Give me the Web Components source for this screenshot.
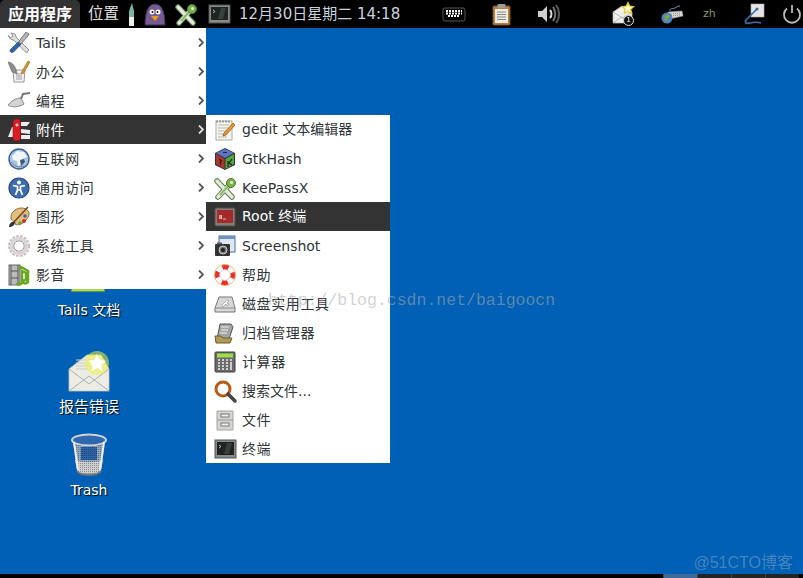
<!DOCTYPE html>
<html lang="zh">
<head>
<meta charset="utf-8">
<title>Tails desktop</title>
<style>
  html, body { margin: 0; height: 100%; }
  body { font-family: "DejaVu Sans", "Noto Sans CJK SC", sans-serif; overflow: hidden; }
</style>
</head>
<body>
<tails-desktop></tails-desktop>

<script>
// all icons live here, drawn on a 22x22 box unless they say otherwise
const ICONS = {
  tools: `<path d="M3 1l4 1 1.500 3.500L21 18l-2.500 3L6 8.500 2.500 7 0 3.500l2.500 2L5 4z" fill="#dcdcdc" stroke="#7a7a7a" stroke-width=".8"/><path d="M18 0l3 2-1 2-7 8-2.500-2z" fill="#b4b4b4" stroke="#666" stroke-width=".8"/><path d="M10 10l3 2.500-7.500 7.500c-1.500 1.500-4 0-3.500-2z" fill="#2f62a5" stroke="#1c3d70" stroke-width=".6"/>`,
  office: `<path d="M5 9h12l-1 12H6z" fill="#f3f3f0" stroke="#9a9a9a"/><path d="M8 12h6v7H8z" fill="#c9c5c9"/><path d="M0 1c4 0 8 4 9 12L4 11z" fill="#8d8d8d" stroke="#666" stroke-width=".6"/><path d="M20 0l2 1-7 12-2-1z" fill="#d99a32" stroke="#8a5b14" stroke-width=".6"/>`,
  trowel: `<path d="M0 15c4-5 9-7 13-7l3 6c-5 3-12 4-16 1z" fill="#d4d4d4" stroke="#8b8b8b"/><path d="M13 9l2-5 7-1" fill="none" stroke="#777" stroke-width="2"/>`,
  knife: `<path d="M0 18L4 8l2 0-1 10z" fill="#e8e8e8"/><path d="M13 3h9l-3 4h-6zM13 10l9 1v4l-9-1zM13 16h9v4h-9z" fill="#eee"/><rect x="5" y="0" width="7.500" height="22" rx="3.500" fill="#dc1c24" stroke="#8d0e13" stroke-width=".6"/><path d="M7.500 6h3M9 4.500v3" stroke="#fff"/>`,
  globe: `<circle cx="11" cy="11" r="10" fill="#a9c4e0" stroke="#3c5f92" stroke-width="1.400"/><path d="M4 8l5-5 7 1 3 5-5 2-1 5-3 3-1-6-4-1z" fill="#f2f5f8"/><path d="M12 12l4-1 1 3-4 4z" fill="#425a7d"/><path d="M3 14c3 4 8 6 13 4" fill="none" stroke="#5e85b5"/>`,
  access: `<circle cx="11" cy="11" r="10" fill="#3d6db0" stroke="#23487f" stroke-width="1.200"/><circle cx="11" cy="5.500" r="2" fill="#fff"/><path d="M5 8.500l4.500 1V13L7.500 18M17 8.500l-4.500 1V13l2 5M9.500 13h3" fill="none" stroke="#fff" stroke-width="1.700"/>`,
  palette: `<path d="M3 11C3 4 12 0 18 3c5 3 3 8 0 11-3 4-8 6-11 4 1-3-4-2-4-7z" fill="#e3bf7d" stroke="#8c6a30"/><circle cx="16" cy="15" r="2" fill="#d62b2b"/><circle cx="12" cy="17" r="1.800" fill="#58a83a"/><circle cx="17" cy="10" r="1.800" fill="#3a64b8"/><path d="M20 1L6 16" stroke="#6d4a22" stroke-width="1.500"/><path d="M1 21c0-4 3-6 6-5 0 3-3 5-6 5z" fill="#333"/>`,
  gear: `<circle cx="11" cy="11" r="9" fill="none" stroke="#c9bfc2" stroke-width="4" stroke-dasharray="2.400 1.200"/><circle cx="11" cy="11" r="7.500" fill="none" stroke="#ddd6d8" stroke-width="3.500"/><circle cx="11" cy="11" r="5.200" fill="#fff" stroke="#9c9497"/>`,
  media: `<rect x="1" y="1" width="11" height="20" fill="#bbb" stroke="#666"/><path d="M3 1v20M10 1v20M3 7h7M3 14h7" stroke="#555"/><path d="M11 5l2-2 7 4v10c0 3-5 3-5 1s2-2 3-2V9l-4-2v11c0 3-5 3-5 1" fill="none" stroke="#6aa61e" stroke-width="2.500"/>`,
  gedit: `<rect x="2" y="2" width="16" height="19" fill="#f6f4ec" stroke="#aaa"/><path d="M4 6h11M4 9h11M4 12h9M4 15h7M4 18h9" stroke="#b5b5b5"/><path d="M3 1.500v2M6 1.500v2M9 1.500v2M12 1.500v2M15 1.500v2" stroke="#666"/><path d="M19 4l2 2-9 10-3 1 1-3z" fill="#e89a2c" stroke="#87500d" stroke-width=".7"/>`,
  hash: `<path d="M11 0l10 5v12l-10 5-10-5V5z" fill="#333"/><path d="M11 1l9 4-9 5-9-5z" fill="#5c74c4"/><path d="M2 6l8.500 5v10L2 16z" fill="#b0342c"/><path d="M20 6l-8.500 5v10l8.500-5z" fill="#53a63b"/><path d="M9 4.500h4M5 11l3 2M6.500 12v5M14 13v6M18 11l-3 4 3 2" fill="none" stroke="#222" stroke-width="1.200"/>`,
  key: `<path d="M3 4l15 16M4 20L15 8" fill="none" stroke="#5d7f4a" stroke-width="5.500" stroke-linecap="round"/><path d="M3 4l15 16M4 20L15 8" fill="none" stroke="#e3e9dd" stroke-width="3.500" stroke-linecap="round"/><path d="M6 18L15 8" stroke="#8cbc5f" stroke-width="2"/><circle cx="17" cy="6" r="4.500" fill="#7ab24a" stroke="#4d7a2a"/><circle cx="17.500" cy="5.500" r="1.500" fill="#e9f2e0"/>`,
  rootterm: `<rect x="1" y="2" width="20" height="18" rx="1" fill="#827f7b" stroke="#524f4b"/><rect x="3" y="4" width="16" height="13" fill="#a32a28"/><path d="M5 12h3M5 10h3M6 9v4M7.500 9v4M9 13h3" stroke="#f5d5d5" stroke-width=".8"/>`,
  shot: `<rect x="5" y="1" width="16" height="16" fill="#dfe7f0" stroke="#3f6aa0"/><rect x="5" y="1" width="16" height="3" fill="#6d93c0"/><rect x="1" y="9" width="15" height="12" rx="1" fill="#333"/><rect x="3" y="7.500" width="5" height="2" fill="#555"/><circle cx="9" cy="15" r="4" fill="#777" stroke="#ccc"/><circle cx="9" cy="15" r="2" fill="#222"/>`,
  help: `<circle cx="11" cy="11" r="8" fill="none" stroke="#fff" stroke-width="5.500"/><circle cx="11" cy="11" r="8" fill="none" stroke="#e62e2e" stroke-width="5" stroke-dasharray="6.300 6.300" stroke-dashoffset="3"/><circle cx="11" cy="11" r="10.500" fill="none" stroke="#eeb15e" stroke-width=".9"/><circle cx="11" cy="11" r="5.300" fill="none" stroke="#c5c0b8" stroke-width=".7"/>`,
  disk: `<path d="M5 4h13l3 11v4H1v-4z" fill="#d7d7d7" stroke="#777"/><path d="M1 15h20" stroke="#888"/><path d="M8 12l5-5 2 1-2 2 2 1-2 2-1-2-3 3z" fill="#f6f6f6" stroke="#888" stroke-width=".6"/>`,
  archive: `<path d="M6 2h11l2 3-4 12H3z" fill="#a5a5a5" stroke="#555"/><path d="M7 5h8M7 8h7M6 11h7" stroke="#eee"/><path d="M1 14h6l2 2h9l-2 5H2z" fill="#b09a59" stroke="#6d5c2c"/>`,
  calc: `<rect x="1" y="1" width="20" height="20" rx="1" fill="#6b6b6b" stroke="#3f3f3f"/><rect x="3" y="2.500" width="16" height="4" fill="#9be046"/><path d="M4 9h2M8 9h2M12 9h2M16 9h2M4 12h2M8 12h2M12 12h2M4 15h2M8 15h2M12 15h2M4 18h2M8 18h2M12 18h2" stroke="#cfcfcf" stroke-width="2"/><rect x="16" y="11" width="2" height="8" fill="#cfcfcf"/>`,
  search: `<circle cx="9" cy="9" r="7" fill="#fff" stroke="#b85a12" stroke-width="3"/><path d="M14 14l7 7" stroke="#444" stroke-width="3.500" stroke-linecap="round"/>`,
  files: `<path d="M3 2h16v19H3z" fill="#d4d6d2" stroke="#a3a5a1"/><path d="M3 11h16" stroke="#999"/><rect x="7" y="5" width="8" height="3" fill="#f2f2f2" stroke="#777"/><rect x="7" y="14" width="8" height="3" fill="#f2f2f2" stroke="#777"/>`,
  term: `<rect x="1" y="2" width="21" height="18" fill="#8a8a86" stroke="#555"/><rect x="3" y="4" width="17" height="13" fill="#1f2422"/><path d="M13 5l-3 11h5l3-11z" fill="#3a403e"/><path d="M5 7l2 1.500L5 10" fill="none" stroke="#ddd" stroke-width=".8"/>`,
  pencil: `<path d="M4 0l2 8v6H1V8z" fill="#78b6a6"/><rect x="1" y="14" width="5" height="9" fill="#f0f0e8"/>`,
  pidgin: `<path d="M1 22C1 9 4 1 11 1s10 8 10 21z" fill="#745b92" stroke="#3d2c52"/><circle cx="8" cy="9" r="2.500" fill="#fff"/><circle cx="14" cy="9" r="2.500" fill="#fff"/><circle cx="8.500" cy="9" r="1" fill="#111"/><circle cx="13.500" cy="9" r="1" fill="#111"/><path d="M7 13h8l-4 5z" fill="#ef9a26"/>`,
  keyboard: `<rect x="1" y="5" width="22" height="13" rx="2" fill="#050505" stroke="#555"/><path d="M4 8h16M4 10.500h16M6 13h12" stroke="#fff" stroke-width="1.800" stroke-dasharray="2 1"/>`,
  clipboard: `<rect x="2" y="3" width="17" height="19" rx="1" fill="#b57f45" stroke="#7c5226"/><rect x="4" y="6" width="13" height="14" fill="#ecebe4"/><path d="M6 9h9M6 11.500h9M6 14h9M6 16.500h9" stroke="#888"/><rect x="6.500" y="1" width="8" height="4" rx="1" fill="#9b9b9b"/>`,
  volume: `<path d="M1 8h4l5-5v16l-5-5H1z" fill="#cfcfcf"/><path d="M13 7c2 2 2 6 0 8" fill="none" stroke="#ddd" stroke-width="2"/><path d="M16 4c3 4 3 10 0 14" fill="none" stroke="#777" stroke-width="2"/><path d="M19 2c4 5 4 13 0 18" fill="none" stroke="#555" stroke-width="2"/>`,
  mail: `<path d="M0 9l9-6 10 6v11H0z" fill="#eeeeea" stroke="#b9b9b5" stroke-width=".7"/><path d="M0 20l9-6 10 6M0 9l9.500 6L19 9" fill="none" stroke="#aaa" stroke-width=".8"/><path d="M15 -.5l1.700 3.600 3.900.5-2.900 2.700.8 3.900-3.500-2-3.500 2 .8-3.900-2.900-2.700 3.900-.5z" fill="#fdfbe0" stroke="#e6c92c" stroke-width="1.300"/>`,
  kbglobe: `<path d="M7 9l14-1 1 5-14 3z" fill="#d8d8d8" stroke="#999" stroke-width=".6"/><path d="M10 11l9-1M10 13l9-1" stroke="#888" stroke-dasharray="1 1"/><path d="M9 8c-1-3 3-2 5-3s2-2 5-2" fill="none" stroke="#6f95bd"/><circle cx="6" cy="15" r="5.500" fill="#4e84c4"/><path d="M3 13l4-2 2 3-3 2 0 3-2-2z" fill="#7fa53b"/>`,
  edit: `<rect x="9" y="1" width="13" height="13" fill="#e6e6e6" stroke="#aaa" stroke-width=".6"/><path d="M15 6L4 17c-2 3 1 4 4 3s9-1 11 0" fill="none" stroke="#3c6fb4" stroke-width="1.700"/><circle cx="15" cy="6" r="1.600" fill="#3c6fb4"/>`,
  power: `<path d="M6 5.500a8 8 0 1 0 10 0" fill="none" stroke="#bbb" stroke-width="1.800"/><path d="M11 2v8" stroke="#bbb" stroke-width="1.800"/>`,
  bigmail: `<path d="M2 17L20 3h14l8 14v22H2z" fill="#ecece6" stroke="#c4c4bc" stroke-width=".8"/><path d="M9 8h18M9 11h18M9 14h14M9 17h12" stroke="#cfcfc9"/><path d="M2 39l20-15 20 15M2 17l20 15 20-15" fill="none" stroke="#b0b0a8"/><circle cx="30" cy="11" r="12" fill="#eef23a" opacity=".55"/><path d="M30 2l2.700 6 6.300.7-4.700 4.300 1.300 6.300-5.600-3.200-5.600 3.200 1.300-6.300L21 8.700l6.300-.7z" fill="#fff"/>`,
  trash: `<defs><pattern id="mesh" width="2" height="2" patternUnits="userSpaceOnUse"><rect width="1" height="1" fill="#111" opacity=".35"/></pattern></defs><ellipse cx="19" cy="7" rx="17" ry="5.500" fill="#2f68ae" stroke="#d3d3d3" stroke-width="2"/><path d="M3 9l4 28c2 6 22 6 24 0l4-28c-3 6-29 6-32 0z" fill="#8fa6bf"/><path d="M11 14h16v13H11z" fill="#2c62a8"/><path d="M5 27c8 3 20 3 28 0l-2 10c-2 6-22 6-24 0z" fill="#cfcfcf"/><path d="M3 9l4 28c2 6 22 6 24 0l4-28c-3 6-29 6-32 0z" fill="url(#mesh)"/><path d="M4 9l4 28M34 9l-4 28" stroke="#ededed" stroke-width="2"/><path d="M7 38c3 5 21 5 24 0" fill="none" stroke="#777" stroke-width="2"/>`
};

function svgIcon(name, w = 22, h = 22) {
  return `<svg xmlns="http://www.w3.org/2000/svg" width="${w}" height="${h}" viewBox="0 0 ${w} ${h}" overflow="visible" aria-hidden="true">${ICONS[name]}</svg>`;
}

class PanelIcon extends HTMLElement {
  connectedCallback() {
    const root = this.attachShadow({ mode: 'open' });
    root.innerHTML = `
      <style>
        :host { display: block; flex: none; height: 22px; line-height: 0; }
      </style>
      ${svgIcon(this.getAttribute('name'))}
    `;
  }
}
customElements.define('panel-icon', PanelIcon);

class TopPanel extends HTMLElement {
  connectedCallback() {
    const root = this.attachShadow({ mode: 'open' });
    root.innerHTML = `
      <style>
        :host {
          display: flex;
          align-items: center;
          height: 28px;
          background: #000;
          color: #dcdcdc;
          font-size: 15px;
          line-height: 18px;
          flex: none;
        }
        .apps {
          flex: none;
          width: 80px;
          height: 28px;
          line-height: 30px;
          text-align: center;
          background: #333;
          border-radius: 5px 5px 0 0;
          color: #fff;
          font-size: 16px;
          font-weight: bold;
          margin-right: 8px;
        }
        .places { flex: none; width: 40px; font-size: 15.500px; color: #e0e0e0; }
        .clock { flex: none; width: 203px; color: #c9d3de; white-space: nowrap; }
        .zh { flex: none; width: 39px; color: #7f9c6e; font-size: 11px; }
        .badge {
          position: absolute;
          left: 623px;
          top: 15px;
          width: 9px;
          height: 9px;
          line-height: 9px;
          border-radius: 50%;
          background: #111;
          border: 1px solid #ddd;
          color: #fff;
          font-size: 7px;
          text-align: center;
        }
      </style>
      <div class="apps">应用程序</div>
      <div class="places">位置</div>
      <panel-icon style="width:16px" name="pencil"></panel-icon>
      <panel-icon style="width:31px" name="pidgin"></panel-icon>
      <panel-icon style="width:33px" name="key"></panel-icon>
      <panel-icon style="width:31px" name="term"></panel-icon>
      <div class="clock">12月30日星期二 14:18</div>
      <panel-icon style="width:49px" name="keyboard"></panel-icon>
      <panel-icon style="width:46px" name="clipboard"></panel-icon>
      <panel-icon style="width:76px" name="volume"></panel-icon>
      <panel-icon style="width:48px" name="mail"></panel-icon>
      <panel-icon style="width:42px" name="kbglobe"></panel-icon>
      <div class="zh">zh</div>
      <panel-icon style="width:39px" name="edit"></panel-icon>
      <panel-icon name="power"></panel-icon>
      <div class="badge">1</div>
    `;
  }
}
customElements.define('top-panel', TopPanel);

class MenuItem extends HTMLElement {
  connectedCallback() {
    const root = this.attachShadow({ mode: 'open' });
    const arrow = this.hasAttribute('sub')
      ? `<svg class="arrow" width="6" height="9" viewBox="0 0 6 9"><path d="M1 .5L5 4.500 1 8.500" fill="none" stroke="currentColor" stroke-width="1.800"/></svg>`
      : '';
    root.innerHTML = `
      <style>
        :host {
          display: flex;
          align-items: center;
          height: 29px;
          padding-left: 8px;
          color: #2e3436;
        }
        :host([active]) { background: #333; color: #fff; }
        .icon { width: 22px; height: 22px; flex: none; line-height: 0; margin-right: 6px; }
        .label { flex: 1; white-space: nowrap; line-height: 16px; }
        :host([zh]) .label { letter-spacing: .6px; }
        :host([mix]) .label { padding-bottom: 2px; }
        .arrow { flex: none; margin-right: 2px; color: #555; }
        :host([active]) .arrow { color: #ddd; }
      </style>
      <div class="icon">${svgIcon(this.getAttribute('icon'))}</div>
      <div class="label"><slot></slot></div>
      ${arrow}
    `;
  }
}
customElements.define('menu-item', MenuItem);

class PopupMenu extends HTMLElement {
  connectedCallback() {
    const root = this.attachShadow({ mode: 'open' });
    root.innerHTML = `
      <style>
        :host {
          display: block;
          position: absolute;
          background: #fff;
          font-size: 14px;
        }
      </style>
      <slot></slot>
    `;
  }
}
customElements.define('popup-menu', PopupMenu);

class DesktopIcon extends HTMLElement {
  connectedCallback() {
    const root = this.attachShadow({ mode: 'open' });
    root.innerHTML = `
      <style>
        :host {
          position: absolute;
          width: 110px;
          display: flex;
          flex-direction: column;
          align-items: center;
          color: #fff;
          font-size: 14px;
          line-height: 17px;
          text-shadow: 1px 1px 1px #000;
        }
        .pic { line-height: 0; margin-bottom: 5px; }
      </style>
      <div class="pic"><slot name="pic"></slot></div>
      <slot></slot>
    `;
  }
}
customElements.define('desktop-icon', DesktopIcon);

class TailsDesktop extends HTMLElement {
  connectedCallback() {
    const root = this.attachShadow({ mode: 'open' });
    root.innerHTML = `
      <style>
        :host {
          display: flex;
          flex-direction: column;
          position: relative;
          width: 803px;
          height: 578px;
          overflow: hidden;
          background: #0060b5;
        }
        .desk { flex: 1; }
        .bottom { flex: none; height: 4px; background: #000; display: flex; padding-left: 663px; }
        .bottom div { width: 33px; background: #252525; border-left: 1px solid #444; }
        .bottom div:first-child { background: #3f6a98; }
        .doc-edge {
          position: absolute;
          left: 71px;
          top: 289px;
          width: 34px;
          height: 3px;
          background: #a6d962;
          border: solid #6a9a2a;
          border-width: 0 1px 1px;
          box-sizing: border-box;
        }
        .mark {
          position: absolute;
          left: 268px;
          top: 291px;
          font: 16.500px "Liberation Mono", monospace;
          color: rgba(170, 170, 170, .55);
          white-space: nowrap;
        }
        .cto {
          position: absolute;
          right: 10px;
          top: 549px;
          font: 16px "Liberation Sans", "Noto Sans CJK SC", sans-serif;
          color: rgba(170, 185, 200, .42);
        }
      </style>
      <top-panel></top-panel>
      <div class="desk"></div>
      <div class="bottom"><div></div><div></div><div></div><div></div></div>

      <div class="doc-edge"></div>
      <desktop-icon style="left:34px;top:297px">Tails 文档</desktop-icon>
      <desktop-icon style="left:34px;top:352px;font-size:15px">
        <span slot="pic">${svgIcon('bigmail', 44, 42)}</span>报告错误
      </desktop-icon>
      <desktop-icon style="left:34px;top:433px">
        <span slot="pic">${svgIcon('trash', 38, 44)}</span>Trash
      </desktop-icon>

      <popup-menu style="left:0;top:28px;width:206px">
        <menu-item icon="tools" sub>Tails</menu-item>
        <menu-item icon="office" sub zh>办公</menu-item>
        <menu-item icon="trowel" sub zh>编程</menu-item>
        <menu-item icon="knife" sub active zh>附件</menu-item>
        <menu-item icon="globe" sub zh>互联网</menu-item>
        <menu-item icon="access" sub zh>通用访问</menu-item>
        <menu-item icon="palette" sub zh>图形</menu-item>
        <menu-item icon="gear" sub zh>系统工具</menu-item>
        <menu-item icon="media" sub zh>影音</menu-item>
      </popup-menu>

      <popup-menu style="left:206px;top:115px;width:184px">
        <menu-item icon="gedit" mix>gedit 文本编辑器</menu-item>
        <menu-item icon="hash">GtkHash</menu-item>
        <menu-item icon="key">KeePassX</menu-item>
        <menu-item icon="rootterm" active mix>Root 终端</menu-item>
        <menu-item icon="shot">Screenshot</menu-item>
        <menu-item icon="help" zh>帮助</menu-item>
        <menu-item icon="disk" zh>磁盘实用工具</menu-item>
        <menu-item icon="archive" zh>归档管理器</menu-item>
        <menu-item icon="calc" zh>计算器</menu-item>
        <menu-item icon="search">搜索文件...</menu-item>
        <menu-item icon="files" zh>文件</menu-item>
        <menu-item icon="term" zh>终端</menu-item>
      </popup-menu>

      <div class="mark">http://blog.csdn.net/baigoocn</div>
      <div class="cto">@51CTO博客</div>
    `;
  }
}
customElements.define('tails-desktop', TailsDesktop);
</script>
</body>
</html>
